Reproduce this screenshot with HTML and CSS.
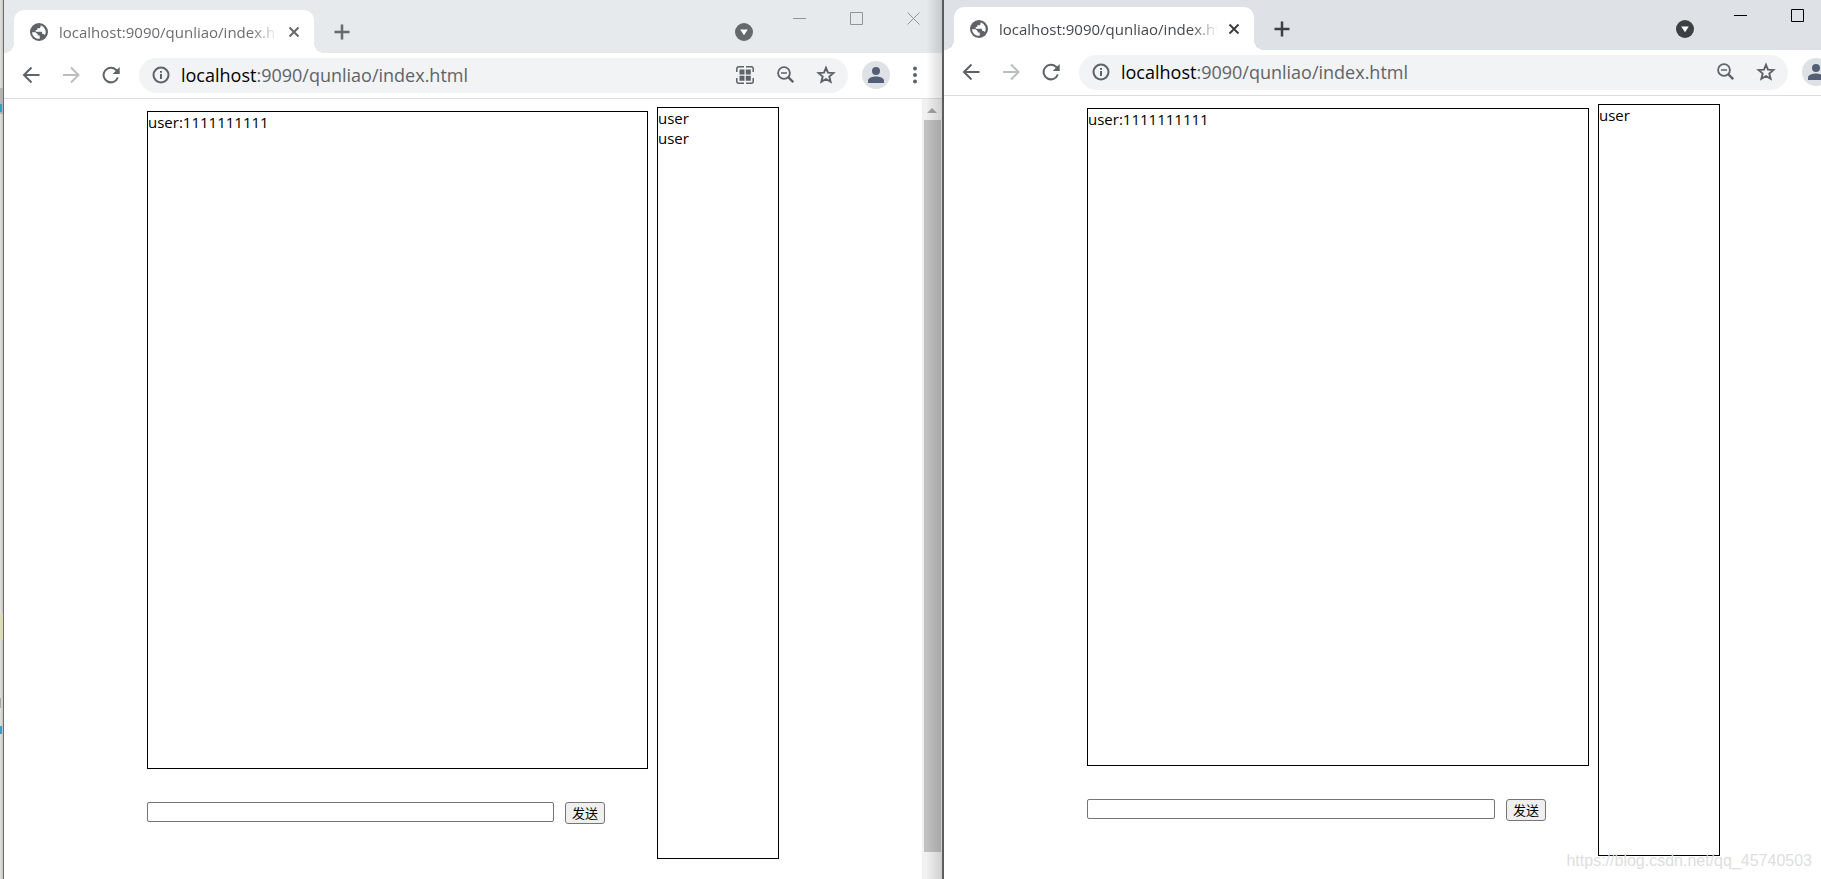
FILE: index.html
```
<!DOCTYPE html>
<html lang="zh-CN">
<head>
<meta charset="utf-8">
<title>qunliao</title>
<link rel="stylesheet" href="styles.css">
</head>
<body>
<svg class="sprite" aria-hidden="true">
  <symbol id="globe" viewBox="0 0 18 18"><circle cx="9" cy="9" r="9" fill="currentColor"/><path d="M2 9.200h3.500l2.200 2.100v1.300h2v3.200A7 7 0 0 1 2 9.200zM10.600 2.200v1.500c0 .9-.7 1.500-1.600 1.500H7.300V7H5.700v1.800h5.300c.7 0 1.200.5 1.200 1.200v.9h1.500l1.200 1.200A7 7 0 0 0 10.600 2.200z" fill="#fff"/></symbol>
  <symbol id="cross" viewBox="0 0 12 12"><path d="M1.500 1.500l9 9m0-9l-9 9" stroke="currentColor" stroke-width="2"/></symbol>
  <symbol id="plus" viewBox="0 0 16 16"><path d="M8 .5v15M.5 8h15" stroke="currentColor" stroke-width="2.500"/></symbol>
  <symbol id="down" viewBox="0 0 18 18"><circle cx="9" cy="9" r="9" fill="currentColor"/><path d="M5.200 6.500h7.600L9 12.300z" fill="#fff"/></symbol>
  <symbol id="back" viewBox="0 0 18 18"><path d="M17.500 9H2.500M9.500 1.500L2 9l7.500 7.500" fill="none" stroke="currentColor" stroke-width="2"/></symbol>
  <symbol id="forward" viewBox="0 0 18 18"><path d="M1 9h15M9 1.500L16.500 9 9 16.500" fill="none" stroke="currentColor" stroke-width="2"/></symbol>
  <symbol id="reload" viewBox="0 0 18 18"><path d="M15.800 11.500A7.300 7.300 0 1 1 14 3.800L16 6" fill="none" stroke="currentColor" stroke-width="2"/><path d="M17.700 1v7h-7z" fill="currentColor"/></symbol>
  <symbol id="info" viewBox="0 0 18 18"><circle cx="9" cy="9" r="7.500" fill="none" stroke="currentColor" stroke-width="2"/><path d="M9 8v5M9 5v1.800" stroke="currentColor" stroke-width="2"/></symbol>
  <symbol id="qr" viewBox="0 0 18 18"><path d="M.8 6V2.800a2 2 0 0 1 2-2H8M10 .8h5.200a2 2 0 0 1 2 2V6M17.200 12v3.200a2 2 0 0 1-2 2H10M8 17.200H2.800a2 2 0 0 1-2-2V12" fill="none" stroke="currentColor" stroke-width="1.500"/><path d="M3.500 3.500h5v5h-5zM9.800 3.500h5v5h-5zM3.500 9.800h5v5h-5zM9.800 9.800h5v5h-5z" fill="currentColor"/></symbol>
  <symbol id="zoomout" viewBox="0 0 18 18"><circle cx="8" cy="7" r="5.900" fill="none" stroke="currentColor" stroke-width="1.800"/><path d="M5 7h6" stroke="currentColor" stroke-width="1.500"/><path d="M12.200 11.200l5 5" stroke="currentColor" stroke-width="2.400"/></symbol>
  <symbol id="star" viewBox="0 0 20 20"><path d="M10 2.800l2 4.900 5.400.4-4.100 3.500 1.300 5.200-4.600-2.800-4.600 2.800 1.300-5.200-4.100-3.500 5.400-.4z" fill="none" stroke="currentColor" stroke-width="1.900"/></symbol>
  <symbol id="person" viewBox="0 0 28 28"><circle cx="14" cy="14" r="14" fill="#dee1e6"/><circle cx="14" cy="10" r="4" fill="currentColor"/><path d="M6 22v-2.500c0-2.700 5-4 8-4s8 1.300 8 4V22z" fill="currentColor"/></symbol>
  <symbol id="dots" viewBox="0 0 18 18"><g fill="currentColor"><circle cx="9" cy="2.500" r="2"/><circle cx="9" cy="9" r="2"/><circle cx="9" cy="15.500" r="2"/></g></symbol>
  <symbol id="min" viewBox="0 0 13 13"><path d="M0 6.500h13" stroke="currentColor"/></symbol>
  <symbol id="max" viewBox="0 0 13 13"><path d="M.5.5h12v12H.5z" fill="none" stroke="currentColor"/></symbol>
  <symbol id="close" viewBox="0 0 13 13"><path d="M.5.5l12 12m0-12l-12 12" stroke="currentColor"/></symbol>
</svg>
<main class="desktop">
  <aside class="behind" aria-hidden="true"></aside>
  <section class="window window-idle">
    <header class="tabstrip">
      <div class="tab">
        <svg class="icon-18 globe"><use href="#globe"/></svg>
        <span class="tab-title">localhost:9090/qunliao/index.html</span>
        <button class="icon-button tab-close" aria-label="Close tab"><svg class="icon-12"><use href="#cross"/></svg></button>
      </div>
      <button class="icon-button new-tab" aria-label="New tab"><svg class="icon-16"><use href="#plus"/></svg></button>
      <button class="icon-button tab-search" aria-label="Search tabs"><svg class="icon-18"><use href="#down"/></svg></button>
      <div class="captions">
        <button class="icon-button" aria-label="Minimize"><svg class="icon-13"><use href="#min"/></svg></button>
        <button class="icon-button" aria-label="Maximize"><svg class="icon-13"><use href="#max"/></svg></button>
        <button class="icon-button" aria-label="Close"><svg class="icon-13"><use href="#close"/></svg></button>
      </div>
    </header>
    <nav class="toolbar">
      <div class="navigation">
        <button class="icon-button" aria-label="Back"><svg class="icon-18"><use href="#back"/></svg></button>
        <button class="icon-button" aria-label="Forward" disabled><svg class="icon-18"><use href="#forward"/></svg></button>
        <button class="icon-button" aria-label="Reload"><svg class="icon-18"><use href="#reload"/></svg></button>
      </div>
      <div class="omnibox">
        <svg class="icon-18"><use href="#info"/></svg>
        <span class="url"><b>localhost</b>:9090/qunliao/index.html</span>
        <button class="icon-button" aria-label="QR code"><svg class="icon-18"><use href="#qr"/></svg></button>
        <button class="icon-button" aria-label="Zoom"><svg class="icon-18"><use href="#zoomout"/></svg></button>
        <button class="icon-button" aria-label="Bookmark"><svg class="icon-20"><use href="#star"/></svg></button>
      </div>
      <button class="icon-button profile" aria-label="Profile"><svg class="icon-28"><use href="#person"/></svg></button>
      <button class="icon-button" aria-label="Menu"><svg class="icon-18"><use href="#dots"/></svg></button>
    </nav>
    <div class="viewport">
      <div class="page">
        <div class="chat">
          <div class="messages">user:1111111111</div>
          <form class="composer">
            <input type="text" aria-label="消息">
            <button type="button">发送</button>
          </form>
        </div>
        <div class="users"><div>user</div><div>user</div></div>
      </div>
      <div class="scrollbar"><span class="scroll-arrow"></span><span class="scroll-thumb"></span></div>
    </div>
  </section>
  <section class="window window-active">
    <header class="tabstrip">
      <div class="tab">
        <svg class="icon-18 globe"><use href="#globe"/></svg>
        <span class="tab-title">localhost:9090/qunliao/index.html</span>
        <button class="icon-button tab-close" aria-label="Close tab"><svg class="icon-12"><use href="#cross"/></svg></button>
      </div>
      <button class="icon-button new-tab" aria-label="New tab"><svg class="icon-16"><use href="#plus"/></svg></button>
      <button class="icon-button tab-search" aria-label="Search tabs"><svg class="icon-18"><use href="#down"/></svg></button>
      <div class="captions">
        <button class="icon-button" aria-label="Minimize"><svg class="icon-13"><use href="#min"/></svg></button>
        <button class="icon-button" aria-label="Maximize"><svg class="icon-13"><use href="#max"/></svg></button>
        <span class="caption-space"></span>
      </div>
    </header>
    <nav class="toolbar">
      <div class="navigation">
        <button class="icon-button" aria-label="Back"><svg class="icon-18"><use href="#back"/></svg></button>
        <button class="icon-button" aria-label="Forward" disabled><svg class="icon-18"><use href="#forward"/></svg></button>
        <button class="icon-button" aria-label="Reload"><svg class="icon-18"><use href="#reload"/></svg></button>
      </div>
      <div class="omnibox">
        <svg class="icon-18"><use href="#info"/></svg>
        <span class="url"><b>localhost</b>:9090/qunliao/index.html</span>
        <button class="icon-button" aria-label="Zoom"><svg class="icon-18"><use href="#zoomout"/></svg></button>
        <button class="icon-button" aria-label="Bookmark"><svg class="icon-20"><use href="#star"/></svg></button>
      </div>
      <button class="icon-button profile" aria-label="Profile"><svg class="icon-28"><use href="#person"/></svg></button>
      <span class="menu-space"></span>
    </nav>
    <div class="viewport">
      <div class="page">
        <div class="chat">
          <div class="messages">user:1111111111</div>
          <form class="composer">
            <input type="text" aria-label="消息">
            <button type="button">发送</button>
          </form>
        </div>
        <div class="users"><div>user</div></div>
      </div>
    </div>
  </section>
  <p class="watermark">https://blog.csdn.net/qq_45740503</p>
</main>
</body>
</html>
```
FILE: styles.css
```
* { box-sizing: border-box; }

body {
  margin: 0;
  overflow: hidden;
  background: #fff;
  color: #000;
  font: 15px/20px "Open Sans", "Noto Sans", "Noto Sans CJK SC", sans-serif;
}

svg { display: block; flex: none; }
.sprite { position: absolute; width: 0; height: 0; }
.icon-12 { width: 12px; height: 12px; }
.icon-13 { width: 13px; height: 13px; }
.icon-16 { width: 16px; height: 16px; }
.icon-18 { width: 18px; height: 18px; }
.icon-20 { width: 20px; height: 20px; }
.icon-28 { width: 28px; height: 28px; }

.icon-button {
  flex: none;
  padding: 0;
  border: 0;
  background: none;
  color: inherit;
}

.desktop {
  position: relative;
  display: grid;
  grid-template-columns: 4px 938fr 879fr;
  height: 100vh;
  overflow: hidden;
}

/* Sliver of the editor window behind the browsers */
.behind {
  border-right: 1px solid #6b6b69;
  background:
    linear-gradient(#32a0c8, #32a0c8) 0 104px / 2px 8px no-repeat,
    linear-gradient(#b4b4b4, #b4b4b4) 0 88px / 3px 26px no-repeat,
    linear-gradient(#dcdcb9, #dcdcb9) 0 614px / 3px 26px no-repeat,
    linear-gradient(#a5a8aa, #a5a8aa) 0 698px / 1px 10px no-repeat,
    linear-gradient(#32a0c8, #32a0c8) 0 726px / 2px 8px no-repeat,
    linear-gradient(90deg, #e2e2e0, #c6c6c4);
}

.window {
  position: relative;
  display: flex;
  flex-direction: column;
  min-width: 0;
  background: #fff;
}

.window-idle { --strip: #e6eaed; --tab-text: #6b6d70; --strip-icon: #66696c; --caption: #919496; }
.window-active { --strip: #dee1e6; --tab-text: #45484c; --strip-icon: #3c4043; --caption: #000; overflow: hidden; border-left: 2px solid #5c5c5c; }
.window-active > * { width: 107%; }

.window-idle::after {
  content: "";
  position: absolute;
  inset: 0 0 0 auto;
  width: 16px;
  background: linear-gradient(90deg, transparent, rgba(0, 0, 0, .14));
  pointer-events: none;
}

.tabstrip {
  display: flex;
  flex: none;
  height: 53px;
  padding: 10px 0 0 10px;
  background: var(--strip);
  color: var(--strip-icon);
}
.window-active .tabstrip { height: 50px; padding-top: 7px; }

.tab {
  position: relative;
  display: flex;
  align-items: center;
  width: 300px;
  padding: 0 14px 0 16px;
  border-radius: 10px 10px 0 0;
  background: #fff;
}
.tab::before,
.tab::after {
  content: "";
  position: absolute;
  bottom: 0;
  width: 10px;
  height: 10px;
}
.tab::before { right: 100%; background: radial-gradient(circle at 0 0, transparent 10px, #fff 10px); }
.tab::after { left: 100%; background: radial-gradient(circle at 100% 0, transparent 10px, #fff 10px); }

.globe { color: #5f6368; }
.tab-title {
  flex: 1;
  margin: 0 10px 0 11px;
  overflow: hidden;
  color: var(--tab-text);
  white-space: nowrap;
  -webkit-mask-image: linear-gradient(90deg, #000 88%, transparent);
  mask-image: linear-gradient(90deg, #000 88%, transparent);
}
.new-tab { margin-left: 20px; }
.tab-search { margin-left: auto; }
.captions {
  display: flex;
  align-items: flex-start;
  gap: 44px;
  margin: 2px 22px 0 40px;
  color: var(--caption);
}
.window-active .captions { margin-right: 21px; }
.caption-space { width: 13px; }

.toolbar {
  display: flex;
  flex: none;
  align-items: center;
  height: 46px;
  padding: 0 18px 1px;
  border-bottom: 1px solid #dadce0;
  color: #5f6368;
}
.navigation { display: flex; gap: 22px; margin-right: 19px; }
.navigation button:disabled { color: #bbbdbf; }
.omnibox {
  display: flex;
  flex: 1;
  align-items: center;
  gap: 22px;
  height: 35px;
  padding: 0 12px 0 13px;
  border-radius: 18px;
  background: #f1f3f4;
}
.url {
  flex: 1;
  margin-left: -11px;
  font-size: 18px;
  line-height: 24px;
  white-space: nowrap;
}
.url b { color: #000; font-weight: 400; }
.profile { margin: 0 16px 0 14px; color: #525f75; }
.menu-space { width: 18px; }

.viewport { display: flex; flex: 1; min-height: 0; }
.page {
  display: flex;
  flex: 1;
  align-items: flex-start;
  gap: 9px;
  padding: 8px 0 0 143px;
}
.chat { width: 502px; padding-top: 4px; }
.window-idle .chat { width: 501px; }
.messages { height: 658px; border: 1px solid #000; }
.users { width: 122px; height: 752px; border: 1px solid #000; }

.composer { display: flex; gap: 11px; margin-top: 33px; align-items: flex-start; }
.composer input {
  width: 407px;
  height: 20px;
  border: 1px solid #767676;
  border-radius: 2px;
  background: #fff;
}
.window-active .composer input { width: 408px; }
.composer button {
  width: 40px;
  height: 22px;
  padding: 0;
  border: 1px solid #767676;
  border-radius: 3px;
  background: #efefef;
  color: #000;
  font: 13px/20px "Noto Sans CJK SC", sans-serif;
}

.scrollbar {
  display: flex;
  flex-direction: column;
  align-items: center;
  width: 20px;
  background: #f1f1f1;
}
.scroll-arrow {
  margin: 9px 0 7px;
  border: 5px solid transparent;
  border-top: 0;
  border-bottom-color: #a3a3a3;
}
.scroll-thumb { width: 17px; height: 732px; background: #c1c1c1; }

.watermark {
  position: absolute;
  right: 9px;
  bottom: 8px;
  margin: 0;
  color: #dedede;
  font-family: "Liberation Sans", Arial, sans-serif;
  font-size: 16px;
}
```
